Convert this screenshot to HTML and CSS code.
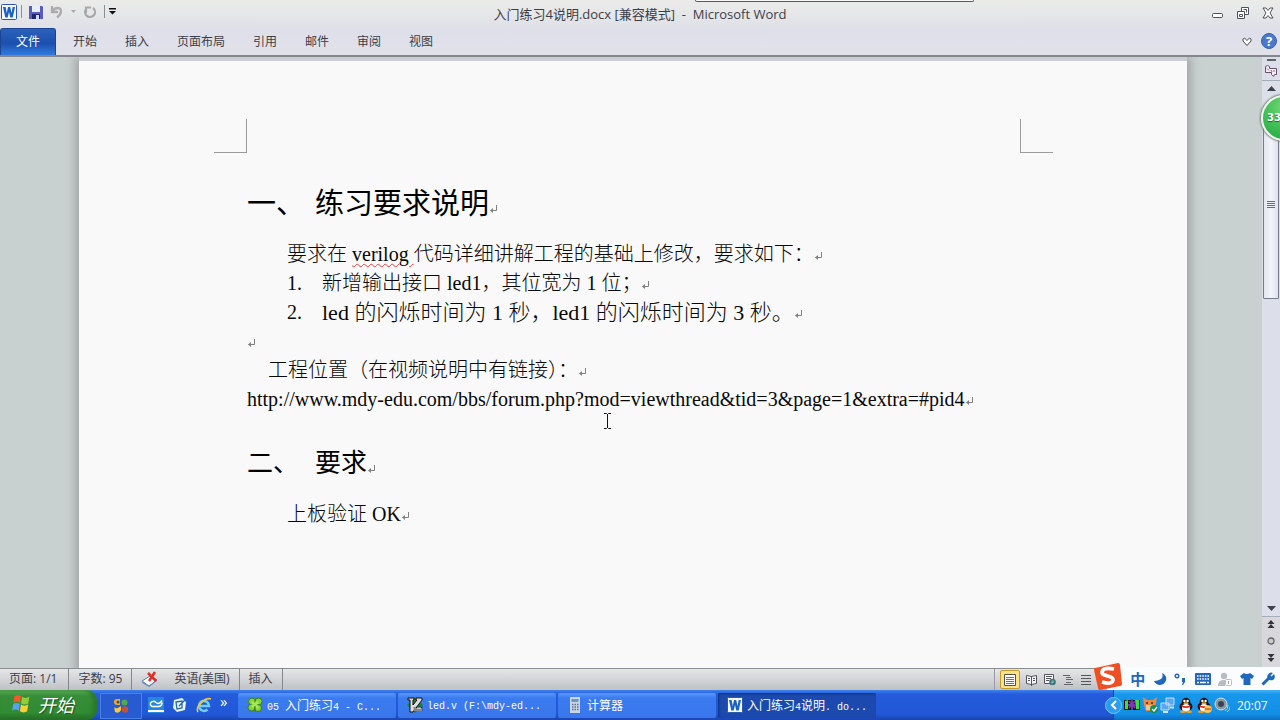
FILE: index.html
```html
<!DOCTYPE html>
<html lang="zh-CN">
<head>
<meta charset="utf-8">
<title>入门练习4说明.docx - Microsoft Word</title>
<link rel="stylesheet" href="styles.css">
</head>
<body>
<svg class="defs" aria-hidden="true">
  <defs>
    <symbol id="ret" viewBox="0 0 9 10"><path d="M7.500 1v5.500H1.500" fill="none" stroke="#808080"/><path d="M4 4v5L1 6.500z" fill="#808080"/></symbol>
    <symbol id="word" viewBox="0 0 16 16"><rect x=".5" y=".5" width="15" height="15" rx="1" fill="#f4f9ff" stroke="#2a5aa8"/><path d="M2 3h2.600l1.200 6L7 3h2.200l1.300 6 1.200-6H14l-2.300 10.500H9.300L8 8l-1.300 5.500H4.300z" fill="#1c62c0"/></symbol>
    <symbol id="penguin" viewBox="0 0 16 16"><ellipse cx="8" cy="9.500" rx="6.500" ry="5" fill="#171717"/><circle cx="8" cy="5" r="4.300" fill="#171717"/><ellipse cx="8" cy="11" rx="4" ry="4" fill="#fff"/><circle cx="6.400" cy="4" r="1.200" fill="#fff"/><circle cx="9.600" cy="4" r="1.200" fill="#fff"/><ellipse cx="8" cy="6.300" rx="2.600" ry="1" fill="#f5a21b"/><path d="M3.500 8q4.500 2.500 9 0v2q-4.500 2-9 0z" fill="#e02a20"/><ellipse cx="5" cy="14.700" rx="3" ry="1.200" fill="#f5a21b"/><ellipse cx="11" cy="14.700" rx="3" ry="1.200" fill="#f5a21b"/></symbol>
  </defs>
</svg>
<div class="app">
  <header class="ribbon">
    <div class="titlebar">
      <div class="quick">
        <svg class="i16"><use href="#word"/></svg>
        <span class="vbar"></span>
        <button aria-label="保存"><svg class="i14" viewBox="0 0 14 14"><path d="M0 1h13l1 1v12H0z" fill="#5a5cc0"/><path d="M3 1h8v6H3z" fill="#e8effc"/><path d="M3 9h8v5H3z" fill="#20246c"/><path d="M7 10h3v4H7z" fill="#cdd8f2"/></svg></button>
        <button aria-label="撤消"><svg class="i14" viewBox="0 0 14 14"><path d="M2 1v6h6M2.500 6.500C5 2 11 2 11 6c0 3-2 5-4 6.500" fill="none" stroke="#adadb1" stroke-width="2.400"/></svg></button>
        <svg class="tiny" viewBox="0 0 5 3"><path d="M0 0h5L2.500 3z" fill="#a8a8ac"/></svg>
        <button aria-label="重复"><svg class="i14" viewBox="0 0 14 14"><path d="M10 3a5 5 0 1 1-7 1M3 8V2.500h5" fill="none" stroke="#a9a9ad" stroke-width="2.200"/></svg></button>
        <span class="vbar"></span>
        <button aria-label="自定义快速访问工具栏"><svg class="cust" viewBox="0 0 7 7"><path d="M0 0h7v1.500H0zM0 3h7L3.500 6.500z" fill="#111"/></svg></button>
      </div>
      <h1 class="title">入门练习4说明.docx [兼容模式] &nbsp;-&nbsp; Microsoft Word</h1>
      <div class="winbtns">
        <button aria-label="最小化"><svg class="i12" viewBox="0 0 12 12"><rect x=".5" y="6.500" width="10" height="4" rx="1" fill="#fff" stroke="#50505a"/></svg></button>
        <button aria-label="还原"><svg class="i12" viewBox="0 0 12 12"><path d="M4.500.5h7v7h-7z" fill="#fff" stroke="#50505a"/><path d="M.5 4.500h7v7h-7z" fill="#fff" stroke="#50505a"/><path d="M2.500 7.500h3v2h-3zM6.500 2.500h3v3" fill="none" stroke="#50505a"/></svg></button>
        <button aria-label="关闭"><svg class="i12" viewBox="0 0 12 12"><path d="M1 1h3l2 2.500L8 1h3L8 6l3 5H8L6 8.500 4 11H1l3-5z" fill="#fff" stroke="#50505a"/></svg></button>
      </div>
    </div>
    <nav class="tabs">
      <button class="file">文件</button>
      <button>开始</button><button>插入</button><button>页面布局</button><button>引用</button><button>邮件</button><button>审阅</button><button>视图</button>
      <span class="grow"></span>
      <button class="icon" aria-label="展开功能区"><svg class="i10" viewBox="0 0 10 10"><path d="M1 2l1.500-1L5 3.500 7.500 1 9 2v2L5 8.500 1 4z" fill="#fff" stroke="#484852"/></svg></button>
      <button class="icon help" aria-label="帮助">?</button>
    </nav>
  </header>

  <main class="work">
    <article class="page">
      <div class="corners"><span class="corner left"></span><span class="corner right"></span></div>
      <div class="content">
        <h2 class="head first"><span class="num">一、</span>练习要求说明<svg class="ret"><use href="#ret"/></svg></h2>
        <p class="indent">要求在 <span class="typo">verilog </span>代码详细讲解工程的基础上修改，要求如下：<svg class="ret"><use href="#ret"/></svg></p>
        <p class="item"><span class="no">1.</span>新增输出接口 led1，其位宽为 1 位；<svg class="ret"><use href="#ret"/></svg></p>
        <p class="item"><span class="no">2.</span><span class="large">led 的闪烁时间为 1 秒，led1 的闪烁时间为 3 秒。</span><svg class="ret"><use href="#ret"/></svg></p>
        <p><svg class="ret"><use href="#ret"/></svg></p>
        <p class="half">工程位置（在视频说明中有链接）：<svg class="ret"><use href="#ret"/></svg></p>
        <p>http://www.mdy-edu.com/bbs/forum.php?mod=viewthread&amp;tid=3&amp;page=1&amp;extra=#pid4<svg class="ret"><use href="#ret"/></svg></p>
        <h2 class="head second"><span class="num">二、</span>要求<svg class="ret"><use href="#ret"/></svg></h2>
        <p class="indent">上板验证 OK<svg class="ret"><use href="#ret"/></svg></p>
      </div>
      <svg class="cursor" viewBox="0 0 7 16"><path d="M0 .5h2.500l1 1 1-1H7M3.500 1v14M0 15.500h2.500l1-1 1 1H7" fill="none" stroke="#111"/></svg>
    </article>
    <aside class="scroll">
      <span class="split"></span>
      <button class="ruler" aria-label="标尺"><svg class="i12" viewBox="0 0 12 12"><path d="M.5 1.500l2-1 2 1v2h7v6h-2l-1 2-2-2v-2h-6z" fill="#f6edf5" stroke="#65536c"/><path d="M2 3.500l2 2M6 5l1 2M9 5v2" stroke="#8b6a7d"/></svg></button>
      <button class="up" aria-label="向上滚动"><svg class="arrow" viewBox="0 0 9 5"><path d="M0 5h9L4.500 0z" fill="#40404c"/></svg></button>
      <div class="track"><div class="thumb"><i></i></div></div>
      <button class="down" aria-label="向下滚动"><svg class="arrow" viewBox="0 0 9 5"><path d="M0 0h9L4.500 5z" fill="#40404c"/></svg></button>
      <button class="nav" aria-label="前一页"><svg class="pg" viewBox="0 0 7 8"><path d="M0 4h7L3.500 0zM0 8h7L3.500 4z" fill="#33333d"/></svg></button>
      <button class="nav" aria-label="选择浏览对象"><svg class="pg" viewBox="0 0 8 8"><circle cx="4" cy="4" r="3" fill="#ccc" stroke="#63636b" stroke-width="1.300"/></svg></button>
      <button class="nav" aria-label="下一页"><svg class="pg" viewBox="0 0 7 8"><path d="M0 0h7L3.500 4zM0 4h7L3.500 8z" fill="#33333d"/></svg></button>
    </aside>
  </main>

  <footer class="status">
    <span class="cell">页面: 1/1</span>
    <span class="cell">字数: 95</span>
    <span class="cell lang"><svg class="i18" viewBox="0 0 18 16"><path d="M1 10l8-5 7 4-8 6z" fill="#fff" stroke="#5a78ac"/><path d="M1 10v2l7 4 8-6V9l-8 6z" fill="#6d8ec8"/><path d="M7 2l8 8M14 1L8 10" stroke="#e02e26" stroke-width="2.500"/></svg>英语(美国)</span>
    <span class="cell">插入</span>
    <span class="grow"></span>
    <div class="views">
      <button class="on" aria-label="页面视图"><svg class="i12" viewBox="0 0 12 12"><path d="M.5.5h11v11H.5z" fill="#fff" stroke="#55513f"/><path d="M2 3.500h8M2 5.500h8M2 7.500h8M2 9.500h8" stroke="#77705a"/></svg></button>
      <button aria-label="阅读版式"><svg class="i12" viewBox="0 0 12 12"><path d="M.5 1.500l5 1 5-1v8l-5 1-5-1zM5.500 2v10" fill="#f7f7f7" stroke="#55555c"/><path d="M2 4.500h2M2 6.500h2M7 4.500h2M7 6.500h2" stroke="#55555c"/></svg></button>
      <button aria-label="Web 版式"><svg class="i12" viewBox="0 0 12 12"><path d="M.5.5h9v9h-9z" fill="#f7f7f7" stroke="#55555c"/><path d="M2 2.500h6M2 4.500h5M2 6.500h3" stroke="#55555c"/><circle cx="8.500" cy="8" r="3.300" fill="#3d7580"/><path d="M7 8l2-2 1 2-2 2z" fill="#82b79a"/></svg></button>
      <button aria-label="大纲视图"><svg class="i12" viewBox="0 0 12 12"><path d="M1 1.500h7M4 3.500h5M4 5.500h7M4 8.500h5M2 10.500h9" stroke="#66666e"/></svg></button>
      <button aria-label="草稿"><svg class="i12" viewBox="0 0 12 12"><path d="M1 1.500h10M1 4.500h10M1 7.500h10M1 10.500h10" stroke="#55555c"/></svg></button>
    </div>
  </footer>

  <footer class="taskbar">
    <button class="start"><svg class="flag" viewBox="0 0 18 17"><path d="M3 2q3-2 6 0L8 8Q5 6 2 8z" fill="#f05a28"/><path d="M10 2.500q3 2 6.500 0L15.500 8.500q-3 2-6.500 0z" fill="#8fce38"/><path d="M2 9q3-2 6 0l-1 6q-3-2-6 0z" fill="#58a2f4"/><path d="M9 9.500q3 2 6.500 0l-1 6q-3 2-6.500 0z" fill="#fbd036"/></svg>开始</button>
    <button class="pinned" aria-label="Office"><svg class="i16" viewBox="0 0 16 16"><path d="M7 1H4a2.500 2.500 0 0 0 0 6h3z" fill="#f0a828"/><circle cx="11.500" cy="4.500" r="3" fill="#54a845"/><path d="M1 9q2 3 7-1v4q-2 4-6 2z" fill="#f3c842"/><circle cx="12" cy="11.500" r="3.200" fill="#c84e3c"/><circle cx="5" cy="4" r="1.500" fill="#4a4e36"/></svg></button>
    <div class="ql">
      <button aria-label="显示桌面"><svg class="i16" viewBox="0 0 16 16"><path d="M0 0h16v16H0z" fill="#2588dc"/><path d="M0 13h16v2H0z" fill="#fff"/><path d="M14 3.500Q11 8 8 5.500T2.500 6Q2 9.500 5 9.500h6Q14 9 14 5.500" fill="none" stroke="#fff" stroke-width="1.500"/></svg></button>
      <button aria-label="便笺"><svg class="i16" viewBox="0 0 16 16"><path d="M2 3l8-2 4 4-1 8-8 2-4-4z" fill="#eaf4fd"/><path d="M4 5l6-1v7l-5 1zM7 9l7-7" fill="none" stroke="#246aa8" stroke-width="1.300"/></svg></button>
      <button aria-label="Internet Explorer"><svg class="i16" viewBox="0 0 16 16"><path d="M4 9h9a5 5 0 1 0-1.500 3.500" fill="none" stroke="#6cd0f8" stroke-width="2.500"/><path d="M2 15C-1 10 9 0 15 2" fill="none" stroke="#f5c53a" stroke-width="1.600"/></svg></button>
      <span class="more">»</span>
    </div>
    <div class="tasks">
      <button><svg class="i16" viewBox="0 0 16 16"><g fill="#85d53c" stroke="#35801d"><circle cx="5" cy="4.500" r="3.500"/><circle cx="11.500" cy="4.500" r="3.500"/><circle cx="4.500" cy="10.500" r="3.500"/><circle cx="11" cy="11" r="3.500"/></g><path d="M5 5l6 6M11 5l-6 5" stroke="#a5e858" stroke-width="3"/><path d="M8 9v6" stroke="#35801d"/></svg><span><span class="m">05 </span>入门练习<span class="m">4 - C...</span></span></button>
      <button><svg class="i16" viewBox="0 0 16 16"><path d="M8 0l8 8-8 8-8-8z" fill="#14853a"/><path d="M1 1h6v2H6v5l4-5H9V1h6v2L6 15H3V3H1z" fill="#ddd" stroke="#111"/><path d="M8 14v-4M10 14v-3h2v3M12 11h2v3" fill="none" stroke="#111" stroke-width="2.400"/><path d="M8 14v-4M10 14v-3h2v3M12 11h2v3" fill="none" stroke="#fff"/></svg><span><span class="m">led.v (F:\mdy-ed...</span></span></button>
      <button><svg class="i16" viewBox="0 0 16 16"><path d="M3 0h10v16H3z" fill="#cad6e8"/><path d="M4.500 2h7v3h-7z" fill="#6e94c4"/><path d="M5 7.500h7M5 10h7M5 12.500h7" stroke="#596f96" stroke-width="1.500" stroke-dasharray="1.500 1"/></svg><span>计算器</span></button>
      <button class="active"><svg class="i16"><use href="#word"/></svg><span>入门练习<span class="m">4</span>说明<span class="m">. do...</span></span></button>
    </div>
    <div class="tray">
      <button class="expand" aria-label="显示隐藏的图标"><svg class="i10" viewBox="0 0 10 10"><path d="M7 1L3 5l4 4" fill="none" stroke="#fff" stroke-width="2"/></svg></button>
      <svg class="i16" viewBox="0 0 16 16"><path d="M0 3h16v10H0z" fill="#111"/><path d="M1 4l3-1v9H1zM11 3h4v9h-3z" fill="#35e247"/><path d="M8 2v11M5 4l6 7M11 4l-6 7M4 8h8" fill="none" stroke="#7d35b5" stroke-width="1.800"/></svg>
      <svg class="i16" viewBox="0 0 16 16"><path d="M1 0l4 3h6l4-3-1 7-2 7H4L2 8z" fill="#e58a47"/><path d="M4 8h7v5H4z" fill="#f6c493"/><path d="M5 5v2M10 5v2" stroke="#5b260e" stroke-width="1.500"/><circle cx="12" cy="12" r="4" fill="#159149"/><path d="M10 12l2 2 3-4" fill="none" stroke="#fff" stroke-width="1.300"/></svg>
      <svg class="i16" viewBox="0 0 16 16"><path d="M6 1h8v7H6zM1 6h8v7H1z" fill="#5ba7ed" stroke="#c3e1f8"/><path d="M10 10.500h4M3 15h5" stroke="#d4e5f5" stroke-width="2"/></svg>
      <svg class="i16"><use href="#penguin"/></svg>
      <svg class="i16" viewBox="0 0 16 16"><use href="#penguin"/><circle cx="12" cy="12" r="3.800" fill="#ffc65c"/><path d="M9 12h6" stroke="#c15914" stroke-width="1.300"/></svg>
      <svg class="i16" viewBox="0 0 16 16"><circle cx="7" cy="7" r="6" fill="#8b97a0" stroke="#d4dde2"/><circle cx="7" cy="7" r="3" fill="#384454"/><path d="M11 14q3-2 3-6M13 15q3-2 3-5" fill="none" stroke="#a7d7f4"/></svg>
      <time>20:07</time>
    </div>
  </footer>
</div>

<div class="behind"></div>
<div class="ball">33</div>
<div class="ime">
  <svg class="sogou" viewBox="0 0 30 28"><path d="M2 5L25 0q2 0 2 2l2 19q0 2-2 2L7 27q-2 0-2-2L1 7q0-2 1-2z" fill="#f04f23"/><path d="M21 6Q10 4 9 9c-1 5 12 3 11 8q-1 5-11 2" fill="none" stroke="#fff" stroke-width="3.800"/></svg>
  <span class="zh">中</span>
  <svg class="i14" viewBox="0 0 14 14"><path d="M9 1q3 7-8 8c3 7 14 4 12-4q-1-3-4-4z" fill="#2068be"/></svg>
  <svg class="i14" viewBox="0 0 14 14"><circle cx="3" cy="4" r="1.800" fill="none" stroke="#2068be" stroke-width="1.400"/><path d="M8 6h3v4l-2 3H8l1-3H8z" fill="#2068be"/></svg>
  <svg class="i16" viewBox="0 0 16 16"><rect x="0" y="2" width="16" height="12" rx="1" fill="#2068be"/><path d="M2 5h12M2 8h12" stroke="#fff" stroke-width="1.600" stroke-dasharray="1.600 1"/><path d="M2 11.500h2M5 11.500h6M12 11.500h2" stroke="#fff" stroke-width="1.600"/></svg>
  <svg class="i14" viewBox="0 0 14 14"><circle cx="6" cy="4" r="3.200" fill="#b6bdc5"/><path d="M0 14q0-7 7-6v6z" fill="#b6bdc5"/><rect x="7.500" y="7.500" width="6" height="6" rx="1" fill="#fff" stroke="#b6bdc5"/><path d="M10.500 9v3" stroke="#9da6af"/></svg>
  <svg class="i14" viewBox="0 0 14 14"><path d="M4 1q3 2 6 0l4 3-2 3-1.500-1V13h-7V6L2 7 0 4z" fill="#2068be"/></svg>
  <svg class="i14" viewBox="0 0 14 14"><path d="M1.500 12.500L8 6" stroke="#2068be" stroke-width="3"/><path d="M12 1L9.500 3.500l1 1L13 2q2 4-1 6-3 1-5-1-2-3 1-5.500Q10 0 12 1z" fill="#2068be"/></svg>
</div>
</body>
</html>
```

FILE: styles.css
```css
* { box-sizing: border-box; }
body { margin: 0; font-family: "Open Sans", "Noto Sans CJK SC", sans-serif; font-size: 12px; color: #3d3d48; overflow: hidden; }
button { font: inherit; color: inherit; background: none; border: 0; padding: 0; display: flex; align-items: center; justify-content: center; }
svg { display: block; flex: none; }
.defs { position: absolute; width: 0; height: 0; }
.app { height: 100vh; display: flex; flex-direction: column; }
.grow { flex: 1; }
.i10 { width: 10px; height: 10px; }
.i12 { width: 12px; height: 12px; }
.i14 { width: 14px; height: 14px; }
.i16 { width: 16px; height: 16px; }
.i18 { width: 18px; height: 16px; }

/* Ribbon */
.ribbon { background: linear-gradient(#ebebea, #e5e6e8 30%, #dedfe9 55%, #e1e2e9); border-bottom: 2px solid #85868e; }
.titlebar { height: 28px; display: grid; grid-template-columns: 1fr auto 1fr; }
.quick { display: flex; align-items: center; gap: 7px; padding: 0 0 5px 1px; }
.vbar { width: 1px; height: 13px; background: #8e8e96; }
.quick .vbar:first-of-type { margin: 0 0 0 -3px; }
.tiny { width: 5px; height: 3px; }
.cust { width: 7px; height: 7px; margin-left: -3px; }
.title { margin: 0; font-size: 13px; font-weight: 400; line-height: 28px; white-space: nowrap; }
.winbtns { display: flex; justify-content: flex-end; gap: 13px; padding: 0 6px 2px 0; }
.tabs { height: 27px; display: flex; }
.tabs button { padding: 0 14px 2px; }
.tabs .file { width: 56px; margin-right: 3px; color: #fff; border: 1px solid #1a4494; border-bottom: 0; border-radius: 3px 3px 0 0; background: linear-gradient(#2c62ba, #1c4fae 55%, #2f7ae0); }
.tabs .icon { padding: 0; margin-right: 9px; }
.tabs .help { width: 16px; height: 16px; margin: 5px 3px 0 0; border-radius: 50%; color: #fff; background: #4b78c8; border: 1px solid #3560ae; font-size: 13px; font-weight: 700; }

/* Document */
.work { flex: 1; min-height: 0; display: flex; background: #c9d1d0; }
.page { position: relative; flex: 1; margin: 4px 75px 0 79px; background: #f9f9f9; color: #080808; box-shadow: 0 -4px 0 #cccdd2, 0 0 9px 4px #a0a5a6; clip-path: inset(-4px -14px 0 -14px); }
.corners { display: flex; justify-content: space-between; padding: 58px 134px 0 135px; }
.corner { width: 33px; height: 34px; border-bottom: 1px solid #9b9b9b; }
.corner.left { border-right: 1px solid #9b9b9b; }
.corner.right { border-left: 1px solid #9b9b9b; }
.content { padding: 29px 60px 0 168px; font-family: "Liberation Serif", "Noto Sans CJK SC", serif; font-weight: 300; font-size: 20px; }
.content p { margin: 0; display: flex; line-height: 29px; height: 29px; white-space: pre; }
.content .indent { padding-left: 40px; }
.content .half { padding-left: 21px; }
.content .item { padding-left: 40px; }
.content .no { width: 35px; }
.content .large { font-size: 22px; }
.head { display: flex; margin: 0 0 14px; line-height: 44px; height: 44px; font-weight: 400; color: #000; }
.head.first { font-size: 29px; }
.head.second { font-size: 26px; margin-top: 28px; }
.num { width: 68px; }
.ret { width: 9px; height: 10px; align-self: flex-end; margin-bottom: 8px; }
.head .ret { margin-bottom: 12px; }
.typo { text-decoration: underline wavy #e8403c 1px; text-underline-offset: 2px; }
.cursor { position: absolute; left: 525px; top: 352px; width: 7px; height: 16px; }

/* Scroll bar */
.scroll { width: 18px; display: flex; flex-direction: column; align-items: stretch; background: #dcdfe9; padding-top: 2px; }
.split { width: 9px; height: 2px; margin-left: 5px; background: #63636b; }
.ruler { height: 20px; border-bottom: 1px solid #a8acb8; }
.up { height: 15px; }
.arrow { width: 9px; height: 5px; }
.track { flex: 1; padding: 14px 1px 0; }
.thumb { height: 189px; border: 1px solid #777a88; border-radius: 1px; background: linear-gradient(90deg, #e4e6f1, #f4f4fa, #dfe2ef); display: flex; align-items: center; justify-content: center; }
.thumb i { width: 8px; height: 7px; background: repeating-linear-gradient(#696c78 0 1px, transparent 1px 2px); }
.down { height: 16px; border-bottom: 1px solid #a8acb8; }
.nav { height: 17px; padding-bottom: 3px; background: #d8d8dc; }
.pg { width: 8px; height: 8px; }

/* Status bar */
.status { height: 22px; display: flex; align-items: stretch; border-top: 1px solid #8a8c90; background: linear-gradient(#e5e6e8, #bfc2c5); line-height: 18px; padding-right: 188px; }
.cell { display: flex; align-items: center; padding: 0 9px 2px; border-right: 1px solid #85878d; white-space: nowrap; }
.cell:first-child { padding-right: 11px; }
.lang { gap: 15px; }
.views { display: flex; align-items: center; gap: 6px; border-left: 1px solid #999ba0; padding-left: 5px; }
.views .on { width: 20px; height: 19px; background: #fbe28a; border: 1px solid #c29a2d; border-radius: 2px; }

/* Task bar */
.taskbar { height: 30px; display: flex; align-items: stretch; color: #fff; background: linear-gradient(#3f83ee, #235bdb 14%, #2258d8 80%, #1b45ad); }
.start { width: 97px; gap: 7px; font-size: 18px; font-style: italic; border-radius: 0 10px 10px 0; background: linear-gradient(#64b45d, #368e38 20%, #328c32 75%, #236a27); text-shadow: 1px 1px 1px #17501c; box-shadow: inset -4px 0 5px #2a762c; padding: 0 12px 3px 0; }
.flag { width: 20px; height: 19px; }
.pinned { width: 42px; margin: 3px 0 1px 3px; border: 1px solid #4680e8; background: #285bd0; }
.ql { display: flex; align-items: center; gap: 8px; padding-left: 6px; width: 96px; }
.more { font-size: 15px; line-height: 16px; padding-bottom: 9px; }
.tasks { flex: 1; display: flex; gap: 2px; padding: 3px 0 2px; min-width: 0; }
.tasks button { width: 158px; justify-content: flex-start; gap: 4px; padding: 0 0 2px 9px; border-radius: 2px; background: linear-gradient(#5a98f8, #3b7bf0 20%, #3976ec); white-space: nowrap; }
.tasks .active { background: #1c49ad; box-shadow: inset 1px 1px 2px #12337e; }
.m { font-family: "Liberation Mono", monospace; font-size: 10px; white-space: pre; }
.tray { width: 167px; display: flex; align-items: center; gap: 2px; background: linear-gradient(#45b1f4, #1797ec 15%, #128fe5 80%, #0d6fc2); border-left: 1px solid #114d9c; }
.expand { width: 17px; height: 17px; margin-left: -9px; border-radius: 50%; background: #2c9cee; border: 1px solid #7bc6f8; }
.tray time { margin-left: 5px; font-size: 12px; }

/* Floating windows */
.behind { position: absolute; left: 695px; top: 0; width: 279px; height: 2px; background: #f8f8f8; border: 1px solid #526052; border-top: 0; border-radius: 0 0 3px 3px; }
.ball { position: absolute; right: -27px; top: 95px; width: 46px; height: 46px; border-radius: 50%; border: 2px solid #eef3ee; background: radial-gradient(circle at 50% 25%, #70d873, #2fb34c 75%); box-shadow: 0 0 2px 1px #71807a; color: #fff; font-family: "DejaVu Sans", sans-serif; font-size: 10px; font-weight: 700; line-height: 41px; padding-left: 4px; text-shadow: 0 1px 1px #176d2d; }
.ime { position: absolute; right: 0; bottom: 30px; width: 187px; height: 23px; display: flex; align-items: center; justify-content: space-between; padding-right: 5px; background: linear-gradient(90deg, transparent 14px, #fbfcfe 14px); }
.sogou { width: 30px; height: 28px; margin-bottom: 4px; }
.zh { font-size: 15px; line-height: 20px; font-weight: 700; color: #2068be; }
```
